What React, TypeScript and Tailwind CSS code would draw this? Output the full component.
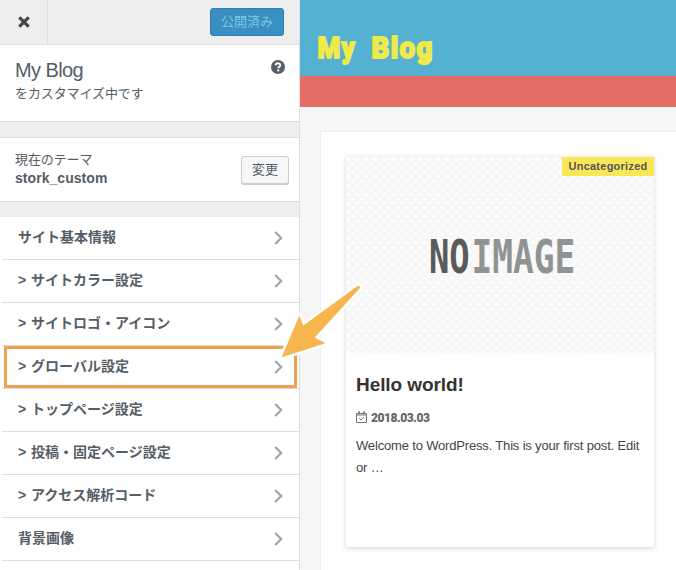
import clsx from 'clsx';

interface Section {
  title: string;
  active?: boolean;
}

const sections: Section[] = [
  { title: 'サイト基本情報' },
  { title: '> サイトカラー設定' },
  { title: '> サイトロゴ・アイコン' },
  { title: '> グローバル設定', active: true },
  { title: '> トップページ設定' },
  { title: '> 投稿・固定ページ設定' },
  { title: '> アクセス解析コード' },
  { title: '背景画像' }
];

const Chevron = () => (
  <svg width="9" height="14" viewBox="0 0 9 14" fill="none" stroke="#a0a5aa" strokeWidth="2.2">
    <path d="M1.2 1 7.2 7 1.2 13" />
  </svg>
);

const SectionRow = ({ title, active }: Section) => (
  <li className="relative ml-[2px] flex h-[43px] items-center justify-between border-b border-[#ddd] pr-4 pl-4">
    <span className="pb-px text-[14px] font-bold [word-spacing:1px] whitespace-pre text-[#555d66]">
      {title}
    </span>
    <Chevron />
    {active && <span className="absolute top-0 right-[2px] left-[2px] h-[42px] border-3 border-[#f0a053]" />}
  </li>
);

const Sidebar = () => (
  <aside className="h-[570px] w-[300px] shrink-0 overflow-hidden border-r border-[#ddd] bg-[#eee] text-[#555d66]">
    <header className="flex h-[45px] items-center justify-between border-b border-[#ddd] pr-[15px]">
      <button className="flex h-full w-12 items-center justify-center border-r border-[#ddd]">
        <svg width="12" height="12" viewBox="0 0 12 12" stroke="#444" strokeWidth="3.2">
          <path d="M1.3 1.3 10.7 10.7M10.7 1.3 1.3 10.7" />
        </svg>
      </button>
      <button className="h-7 w-[74px] rounded-[3px] border border-[#2e7fb3] bg-[#3a8fc2] pb-px text-[13px] leading-none text-[#7bc8e4]">
        公開済み
      </button>
    </header>

    <div className="flex h-[77px] justify-between border-b border-[#ddd] bg-white pt-[13px] pr-[14px] pl-[15px]">
      <div>
        <h1 className="text-[20px] leading-6 tracking-[-0.6px]">My Blog</h1>
        <p className="text-[13px] leading-6 tracking-[-0.1px]">をカスタマイズ中です</p>
      </div>
      <svg className="mt-[2px]" width="14" height="14" viewBox="0 0 14 14">
        <circle cx="7" cy="7" r="7" fill="#555d66" />
        <path
          d="M4.7 5.3C4.7 2.6 9.3 2.6 9.3 5.2 9.3 6.8 7.2 6.7 7.2 8.3"
          fill="none"
          stroke="#fff"
          strokeWidth="1.9"
        />
        <rect x="6.2" y="9.4" width="2" height="2" fill="#fff" />
      </svg>
    </div>

    <div className="mt-[15px] flex h-[65px] items-center justify-between border-y border-[#ddd] bg-white pr-[10px] pl-[15px]">
      <div className="pb-[2px] text-[13px] leading-[19px] tracking-[-0.1px]">
        <div>現在のテーマ</div>
        <div className="text-[14px] font-bold tracking-[0.05px]">stork_custom</div>
      </div>
      <button className="h-7 w-12 rounded-[3px] border border-[#ccc] bg-[#f7f7f7] text-[13px] leading-none shadow-[0_1px_0_#ccc]">
        変更
      </button>
    </div>

    <ul className="mt-[15px] h-[353px] bg-white">
      {sections.map((section) => (
        <SectionRow key={section.title} {...section} />
      ))}
    </ul>
  </aside>
);

const NoImage = () => (
  <svg
    width="308"
    height="196"
    viewBox="0 0 308 196"
    fontFamily="'DejaVu Sans Mono', monospace"
    fontWeight="700"
    fontSize="47"
  >
    <defs>
      <pattern id="dots" width="9" height="8.8" patternUnits="userSpaceOnUse">
        <rect width="9" height="8.8" fill="#f7f7f7" />
        <ellipse cx="2.2" cy="2.2" rx="1.9" ry="1.5" fill="#fff" />
        <ellipse cx="6.7" cy="6.6" rx="1.9" ry="1.5" fill="#fff" />
      </pattern>
    </defs>
    <rect width="308" height="196" fill="url(#dots)" />
    <text transform="translate(83 115.500) scale(0.72 1)" fill="#595b5b">
      NO
    </text>
    <text transform="translate(125.500 115.500) scale(0.733 1)" fill="#8f9492">
      IMAGE
    </text>
  </svg>
);

const CalendarIcon = () => (
  <svg width="11" height="12" viewBox="0 0 11 12" fill="none" stroke="#777">
    <path d="M.5 2.5h10v9H.5zM.5 4h10" />
    <path d="M3 .3v2.9M8 .3v2.9" strokeWidth="1.7" />
    <path d="M3.3 7.3 5 9l3-3" />
  </svg>
);

const PostCard = () => (
  <article className="relative h-[390px] w-[308px] bg-white shadow-[0_1px_5px_rgba(0,0,0,0.18)]">
    <NoImage />
    <span className="absolute top-0 right-0 h-[19px] w-[92px] bg-[#f9e755] text-center text-[11px] leading-[19px] font-bold tracking-[0.25px] text-[#555]">
      Uncategorized
    </span>
    <div className="px-[10px] pt-[19px] text-[#444]">
      <h2 className="text-[19px] leading-[26px] font-bold tracking-[-0.08px] text-[#333]">Hello world!</h2>
      <div className="mt-[9px] flex h-5 items-center gap-1 text-[#666]">
        <CalendarIcon />
        <time className="pt-px font-['Roboto',sans-serif] text-[12px] font-black tracking-[-0.45px]">
          2018.03.03
        </time>
      </div>
      <p className="mt-2 text-[13px] leading-[22px] tracking-[-0.17px] whitespace-nowrap">
        Welcome to WordPress. This is your first post. Edit
        <br />
        or …
      </p>
    </div>
  </article>
);

const Preview = () => (
  <main className="h-[570px] w-[376px] overflow-hidden bg-[#f6f6f6]">
    <div className="h-[76px] bg-[#54b1d2] pt-[28px] pl-[18px]">
      <svg
        width="160"
        height="44"
        viewBox="0 0 160 44"
        fontFamily="Roboto, sans-serif"
        fontWeight="800"
        fontSize="29.500"
        fill="#f0e94b"
        stroke="#f0e94b"
        strokeWidth="2"
        strokeLinejoin="round"
      >
        <text transform="translate(-0.500 30) scale(0.88 1)" letterSpacing="1.5">
          My
        </text>
        <text transform="translate(53.500 30) scale(0.94 1)" letterSpacing="1.500">
          Blog
        </text>
      </svg>
    </div>
    <div className="h-[31px] bg-[#e46d65]" />
    <div className="mt-6 ml-5 h-[440px] border-t border-l border-[#eee] bg-white pt-[25px] pl-[25px]">
      <PostCard />
    </div>
  </main>
);

const Pointer = ({ className }: { className?: string }) => (
  <svg className={clsx('absolute', className)} width="96" height="90" viewBox="0 0 96 90">
    <path
      d="M11.7 82.300 29.300 40.500 33.300 50.500 87.500 11Q89 9.800 90.500 12.500L44.700 62.500 55.500 68.300Z"
      fill="#f6b64d"
      stroke="#fff"
      strokeWidth="5"
      strokeLinejoin="round"
      paintOrder="stroke"
    />
  </svg>
);

export default function App() {
  return (
    <div className="relative flex h-[570px] w-[676px] overflow-hidden bg-white font-['Liberation_Sans','Noto_Sans_CJK_JP',sans-serif]">
      <Sidebar />
      <Preview />
      <Pointer className="top-[275px] left-[270px]" />
    </div>
  );
}
